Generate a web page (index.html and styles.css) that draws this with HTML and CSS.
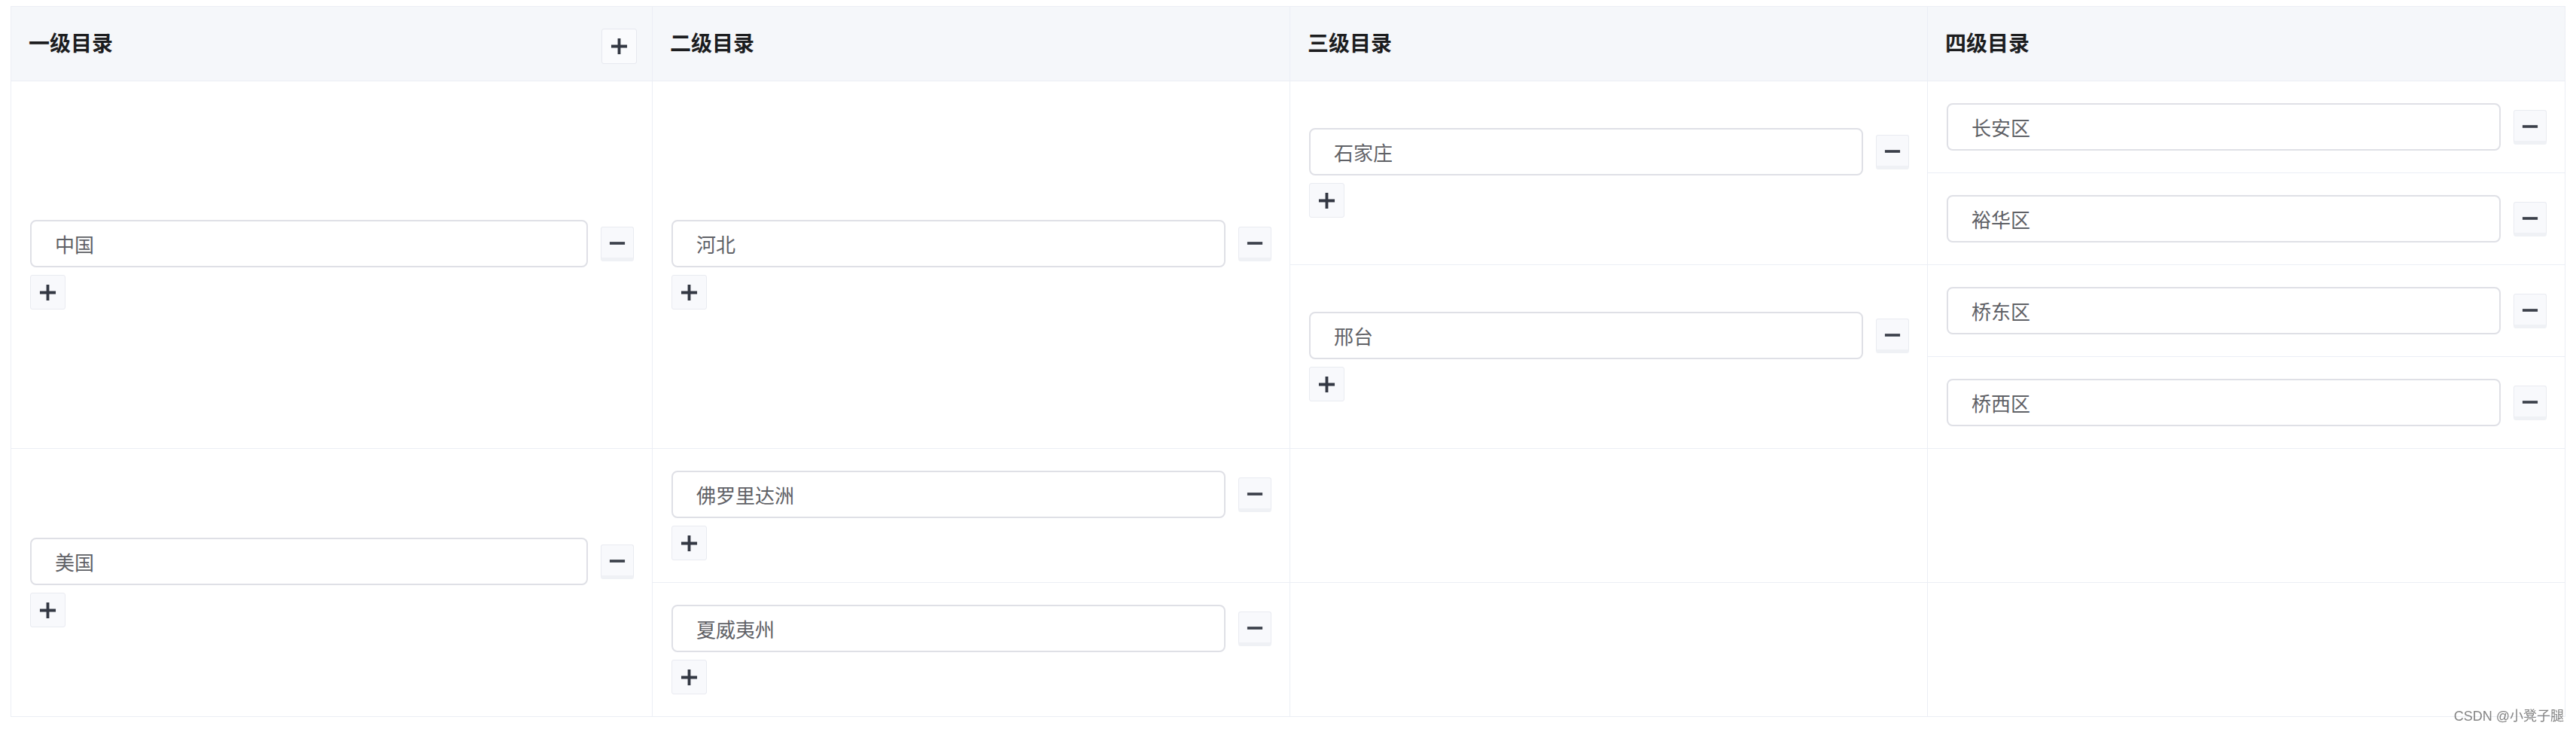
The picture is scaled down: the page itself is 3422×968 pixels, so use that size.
FILE: index.html
```html
<!DOCTYPE html>
<html lang="zh-CN">
<head>
<meta charset="utf-8">
<title>多级目录</title>
<link rel="stylesheet" href="styles.css">
</head>
<body>
<table class="tree-table">
  <colgroup>
    <col class="col-1">
    <col class="col-n">
    <col class="col-n">
    <col class="col-n">
  </colgroup>
  <thead>
    <tr>
      <th>
        <div class="th-inner">
          <span class="th-title">一级目录</span>
          <button class="btn btn-head" type="button"><svg class="ico" viewBox="0 0 24 24"><path d="M12 1v22M1 12h22"/></svg></button>
        </div>
      </th>
      <th><div class="th-inner"><span class="th-title">二级目录</span></div></th>
      <th><div class="th-inner"><span class="th-title">三级目录</span></div></th>
      <th><div class="th-inner"><span class="th-title">四级目录</span></div></th>
    </tr>
  </thead>
  <tbody>
    <tr>
      <td rowspan="4">
        <div class="node">
          <div class="node-row"><div class="field">中国</div><button class="btn btn-del" type="button"><svg class="ico" viewBox="0 0 24 24"><path d="M1 12h22"/></svg></button></div>
          <button class="btn btn-add" type="button"><svg class="ico" viewBox="0 0 24 24"><path d="M12 1v22M1 12h22"/></svg></button>
        </div>
      </td>
      <td rowspan="4">
        <div class="node">
          <div class="node-row"><div class="field">河北</div><button class="btn btn-del" type="button"><svg class="ico" viewBox="0 0 24 24"><path d="M1 12h22"/></svg></button></div>
          <button class="btn btn-add" type="button"><svg class="ico" viewBox="0 0 24 24"><path d="M12 1v22M1 12h22"/></svg></button>
        </div>
      </td>
      <td rowspan="2">
        <div class="node">
          <div class="node-row"><div class="field">石家庄</div><button class="btn btn-del" type="button"><svg class="ico" viewBox="0 0 24 24"><path d="M1 12h22"/></svg></button></div>
          <button class="btn btn-add" type="button"><svg class="ico" viewBox="0 0 24 24"><path d="M12 1v22M1 12h22"/></svg></button>
        </div>
      </td>
      <td>
        <div class="node">
          <div class="node-row"><div class="field">长安区</div><button class="btn btn-del" type="button"><svg class="ico" viewBox="0 0 24 24"><path d="M1 12h22"/></svg></button></div>
        </div>
      </td>
    </tr>
    <tr>
      <td>
        <div class="node">
          <div class="node-row"><div class="field">裕华区</div><button class="btn btn-del" type="button"><svg class="ico" viewBox="0 0 24 24"><path d="M1 12h22"/></svg></button></div>
        </div>
      </td>
    </tr>
    <tr>
      <td rowspan="2">
        <div class="node">
          <div class="node-row"><div class="field">邢台</div><button class="btn btn-del" type="button"><svg class="ico" viewBox="0 0 24 24"><path d="M1 12h22"/></svg></button></div>
          <button class="btn btn-add" type="button"><svg class="ico" viewBox="0 0 24 24"><path d="M12 1v22M1 12h22"/></svg></button>
        </div>
      </td>
      <td>
        <div class="node">
          <div class="node-row"><div class="field">桥东区</div><button class="btn btn-del" type="button"><svg class="ico" viewBox="0 0 24 24"><path d="M1 12h22"/></svg></button></div>
        </div>
      </td>
    </tr>
    <tr>
      <td>
        <div class="node">
          <div class="node-row"><div class="field">桥西区</div><button class="btn btn-del" type="button"><svg class="ico" viewBox="0 0 24 24"><path d="M1 12h22"/></svg></button></div>
        </div>
      </td>
    </tr>
    <tr>
      <td rowspan="2">
        <div class="node">
          <div class="node-row"><div class="field">美国</div><button class="btn btn-del" type="button"><svg class="ico" viewBox="0 0 24 24"><path d="M1 12h22"/></svg></button></div>
          <button class="btn btn-add" type="button"><svg class="ico" viewBox="0 0 24 24"><path d="M12 1v22M1 12h22"/></svg></button>
        </div>
      </td>
      <td>
        <div class="node">
          <div class="node-row"><div class="field">佛罗里达洲</div><button class="btn btn-del" type="button"><svg class="ico" viewBox="0 0 24 24"><path d="M1 12h22"/></svg></button></div>
          <button class="btn btn-add" type="button"><svg class="ico" viewBox="0 0 24 24"><path d="M12 1v22M1 12h22"/></svg></button>
        </div>
      </td>
      <td></td>
      <td></td>
    </tr>
    <tr>
      <td>
        <div class="node">
          <div class="node-row"><div class="field">夏威夷州</div><button class="btn btn-del" type="button"><svg class="ico" viewBox="0 0 24 24"><path d="M1 12h22"/></svg></button></div>
          <button class="btn btn-add" type="button"><svg class="ico" viewBox="0 0 24 24"><path d="M12 1v22M1 12h22"/></svg></button>
        </div>
      </td>
      <td></td>
      <td></td>
    </tr>
  </tbody>
</table>
<div class="watermark">CSDN @小凳子腿</div>
</body>
</html>
```

FILE: styles.css
```css
html, body {
  margin: 0;
  padding: 0;
  background: #ffffff;
}

body {
  padding: 8px 0 0 14px;
  font-family: "Noto Sans CJK SC", "Noto Sans", sans-serif;
  color: #606266;
}

.tree-table {
  width: 3392px;
  table-layout: fixed;
  border-collapse: collapse;
  border: 1px solid #ebeef5;
}

.col-1 { width: 852px; }
.col-n { width: 847px; }

.tree-table th {
  background: #f5f7fa;
  border: 1px solid #ebeef5;
  height: 99px;
  padding: 0 20px 0 23px;
  text-align: left;
  vertical-align: middle;
  box-sizing: border-box;
}

.th-inner {
  display: flex;
  align-items: center;
  justify-content: space-between;
  min-height: 48px;
}

.th-title {
  font-size: 28px;
  font-weight: 700;
  color: #1c1d1f;
  line-height: 40px;
  margin-top: -4px;
}

.tree-table td {
  border: 1px solid #ebeef5;
  padding: 29px 24px 29px 25px;
  vertical-align: middle;
}

.node {
  display: flex;
  flex-direction: column;
  align-items: flex-start;
  gap: 10px;
}

.node-row {
  display: flex;
  align-items: center;
  gap: 17px;
  width: 100%;
}

.field {
  flex: 1;
  height: 63px;
  box-sizing: border-box;
  border: 2px solid #dfe0e6;
  border-radius: 8px;
  padding: 0 30px 0 31px;
  display: flex;
  align-items: center;
  font-size: 26px;
  color: #5f6166;
  background: #fff;
}

.btn {
  display: flex;
  align-items: center;
  justify-content: center;
  padding: 0;
  margin: 0;
  background: #f8f9fc;
  border: 1px solid #e9ebf1;
  border-radius: 3px;
  box-sizing: border-box;
  cursor: pointer;
}

.btn-head {
  width: 47px;
  height: 47px;
  margin-top: 6px;
  background: #fafbfd;
  border-color: #e6e8ef;
}

.btn-add {
  width: 47px;
  height: 46px;
}

.btn-del {
  width: 44px;
  height: 46px;
  border-bottom: 5px solid #eff1f5;
  padding-top: 2px;
}

.ico {
  width: 23px;
  height: 23px;
  fill: none;
  stroke: #333843;
  stroke-width: 4;
}

.btn-del .ico {
  width: 22px;
  height: 22px;
  stroke: #3b404a;
}

.watermark {
  position: fixed;
  right: 16px;
  bottom: 6px;
  font-family: "Liberation Sans", "Noto Sans CJK SC", sans-serif;
  font-size: 18px;
  line-height: 22px;
  color: rgba(110, 110, 110, 0.85);
}
```
